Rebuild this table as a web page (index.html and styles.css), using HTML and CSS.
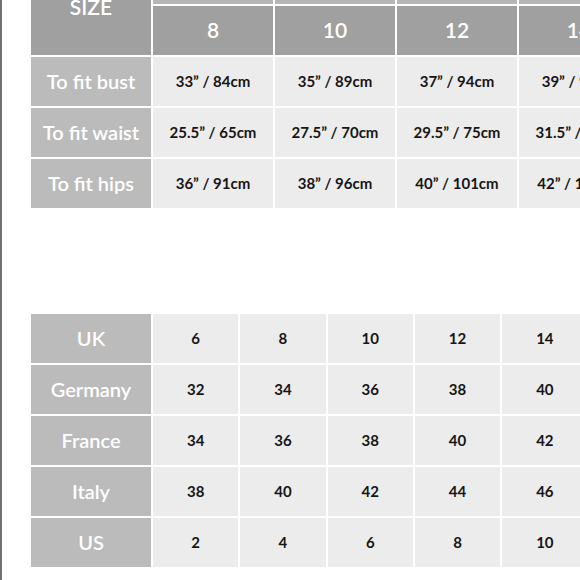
FILE: index.html
```html
<!DOCTYPE html>
<html>
<head>
<meta charset="utf-8">
<link rel="stylesheet" href="styles.css">
</head>
<body>
<div class="page">
  <div class="grid top">
    <div class="cell head size">SIZE</div>
    <div class="cell band"></div>
    <div class="cell band"></div>
    <div class="cell band"></div>
    <div class="cell band"></div>
    <div class="cell head">8</div>
    <div class="cell head">10</div>
    <div class="cell head">12</div>
    <div class="cell head">14</div>

    <div class="cell label">To fit bust</div>
    <div class="cell data">33” / 84cm</div>
    <div class="cell data">35” / 89cm</div>
    <div class="cell data">37” / 94cm</div>
    <div class="cell data">39” / 99cm</div>

    <div class="cell label">To fit waist</div>
    <div class="cell data">25.5” / 65cm</div>
    <div class="cell data">27.5” / 70cm</div>
    <div class="cell data">29.5” / 75cm</div>
    <div class="cell data">31.5” / 80cm</div>

    <div class="cell label">To fit hips</div>
    <div class="cell data">36” / 91cm</div>
    <div class="cell data">38” / 96cm</div>
    <div class="cell data">40” / 101cm</div>
    <div class="cell data">42” / 106cm</div>
  </div>

  <div class="grid bottom">
    <div class="cell label">UK</div>
    <div class="cell data">6</div><div class="cell data">8</div><div class="cell data">10</div><div class="cell data">12</div><div class="cell data">14</div>
    <div class="cell label">Germany</div>
    <div class="cell data">32</div><div class="cell data">34</div><div class="cell data">36</div><div class="cell data">38</div><div class="cell data">40</div>
    <div class="cell label">France</div>
    <div class="cell data">34</div><div class="cell data">36</div><div class="cell data">38</div><div class="cell data">40</div><div class="cell data">42</div>
    <div class="cell label">Italy</div>
    <div class="cell data">38</div><div class="cell data">40</div><div class="cell data">42</div><div class="cell data">44</div><div class="cell data">46</div>
    <div class="cell label">US</div>
    <div class="cell data">2</div><div class="cell data">4</div><div class="cell data">6</div><div class="cell data">8</div><div class="cell data">10</div>
  </div>
</div>
</body>
</html>
```

FILE: styles.css
```css
html, body {
  margin: 0;
  padding: 0;
  background: #ffffff;
  overflow: hidden;
  width: 580px;
  height: 580px;
}

.page {
  width: 578px;
  height: 580px;
  border-left: 2px solid #727272;
  font-family: Lato, "Liberation Sans", sans-serif;
  overflow: hidden;
}

.grid {
  display: grid;
  gap: 2px;
  margin-left: 29px;
  width: max-content;
}

.top {
  grid-template-columns: 120px repeat(4, 120px);
  grid-template-rows: 44px repeat(4, 49px);
  margin-top: -40px;
}

.bottom {
  grid-template-columns: 120px repeat(5, 85.3px);
  grid-auto-rows: 49px;
  margin-top: 106px;
}

.cell {
  display: flex;
  align-items: center;
  justify-content: center;
  white-space: nowrap;
  padding-bottom: 2px;
  box-sizing: border-box;
}

.size {
  grid-row: 1 / span 2;
}

.band {
  background: #b6b6b6;
}

.head {
  background: #a0a0a0;
  color: #ffffff;
  font-size: 21px;
  font-weight: 600;
}

.label {
  background: #bbbbbb;
  color: #ffffff;
  font-size: 20px;
  font-weight: 600;
}

.data {
  background: #ececec;
  color: #161616;
  font-size: 15px;
  font-weight: 700;
}
```
